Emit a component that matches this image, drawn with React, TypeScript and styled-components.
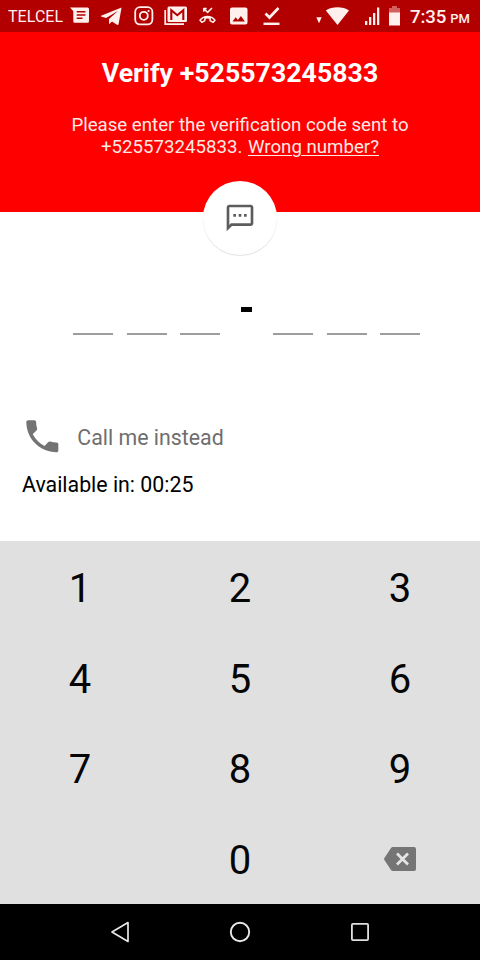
import React from "react";
import styled, { createGlobalStyle } from "styled-components";

const GlobalStyle = createGlobalStyle`
  * { box-sizing: border-box; }
  body { margin: 0; background: #fff; font-family: Roboto, "Liberation Sans", sans-serif; }
`;

const Screen = styled.div`
  width: 480px;
  height: 960px;
  display: flex;
  flex-direction: column;
  background: #fff;
  overflow: hidden;
`;

const StatusBar = styled.header`
  height: 32px;
  flex: none;
  display: flex;
  align-items: center;
  background: #b20000;
  color: #fff0ee;
  padding: 0 10px 0 8px;
`;

const Carrier = styled.span`
  width: 62px;
  padding-top: 1px;
  font-size: 16px;
  line-height: 32px;
  letter-spacing: 0.05px;
  white-space: nowrap;
`;

const StatusIcon = styled.svg<{ $gap: number }>`
  display: block;
  flex: none;
  margin-left: ${({ $gap }) => $gap}px;
`;

const Clock = styled.time`
  margin-left: auto;
  padding-top: 2px;
  font-size: 18.7px;
  font-weight: 500;
  letter-spacing: -0.1px;
  white-space: nowrap;
`;

const Meridiem = styled.span`
  margin-left: 4px;
  font-size: 13px;
  letter-spacing: 0;
`;

const Header = styled.section`
  height: 180px;
  flex: none;
  display: flex;
  flex-direction: column;
  align-items: center;
  background: #fe0000;
  color: #fff;
  text-align: center;
`;

const Title = styled.h1`
  margin: 25px 0 0;
  font-size: 26.67px;
  line-height: 32px;
  font-weight: 700;
  letter-spacing: 0.04px;
  white-space: nowrap;
`;

const Instructions = styled.p`
  margin: 25px 0 0;
  color: #ffe9e4;
  font-size: 18.67px;
  line-height: 22px;
  white-space: nowrap;
`;

const WrongNumber = styled.a`
  margin-left: 1px;
  text-decoration: underline;
  text-decoration-thickness: 1px;
  text-underline-offset: 2px;
`;

const MessageBadge = styled.div`
  width: 74px;
  height: 74px;
  flex: none;
  margin: -31px auto 0;
  display: grid;
  place-items: center;
  border-radius: 50%;
  background: #fff;
  box-shadow: 0 1px 1px rgba(0, 0, 0, 0.12);
`;

const CodeRow = styled.div`
  height: 80px;
  flex: none;
  display: flex;
  align-items: flex-end;
  justify-content: space-between;
  padding: 0 60px 0 73px;
`;

const DigitGroup = styled.div`
  display: flex;
  gap: 13.5px;
`;

const DigitSlot = styled.div`
  width: 40px;
  height: 36px;
  border-bottom: 2px solid #9d9d9d;
`;

const Dash = styled.div`
  width: 11px;
  height: 5px;
  margin-bottom: 23px;
  background: #000;
`;

const CallArea = styled.section`
  flex: 1;
  display: flex;
  flex-direction: column;
  padding: 81px 22px 0;
`;

const CallRow = styled.div`
  display: flex;
  align-items: center;
  height: 42px;
  color: #6e6e6e;
  font-size: 21.33px;
`;

const CallIcon = styled.svg`
  width: 42.67px;
  height: 42.67px;
  flex: none;
  margin: -1px 13.7px 0 -1px;
`;

const Countdown = styled.p`
  margin: 14px 0 0;
  color: #000;
  font-size: 21.33px;
  line-height: 25px;
`;

const Keypad = styled.div`
  height: 363px;
  flex: none;
  display: grid;
  grid-template-columns: repeat(3, 1fr);
  grid-template-rows: repeat(4, 1fr);
  background: #e0e0e0;
`;

const Key = styled.button`
  display: flex;
  align-items: center;
  justify-content: center;
  border: 0;
  padding: 4px 0 0;
  background: none;
  color: #050505;
  font: 400 40px/47px Roboto, sans-serif;
`;

const DeleteKey = styled(Key)`
  padding: 0;
`;

const NavBar = styled.nav`
  height: 56px;
  flex: none;
  display: flex;
  justify-content: center;
  align-items: center;
  background: #000;
`;

const NavButton = styled.div`
  width: 120px;
  display: flex;
  justify-content: center;
`;

const StatusIcons = () => (
  <>
    <StatusIcon $gap={0} width="20" height="18" viewBox="0 0 20 18" fill="currentColor">
      <path fillRule="evenodd" d="M0 .5h17.5Q19 .5 19 2v12.2q0 1.500-1.500 1.500H4.800q-1.500 0-1.500-1.500V4.300zM6.700 4v1.600h8.800V4zM6.700 7.200v1.600h8.800V7.200zM6.700 10.400V12h5.800v-1.600z" />
    </StatusIcon>
    <StatusIcon $gap={11} width="21" height="18" viewBox="0 0 21 18" fill="currentColor">
      <path d="M20.600.5 0 8.700c-.5.3-.4.7.1.9l5 1.500L17.200 3.700 8 12v5.200l3-2.800 5 3.400c.8.4 1.400.2 1.600-.7z" />
    </StatusIcon>
    <StatusIcon $gap={12} width="20" height="20" viewBox="0 0 20 20" fill="none" stroke="currentColor" strokeWidth="1.800">
      <rect x="1.200" y="1.200" width="17.200" height="17.200" rx="4.800" />
      <circle cx="9.800" cy="9.800" r="4" />
      <circle cx="14.600" cy="5" r="1.100" fill="currentColor" stroke="none" />
    </StatusIcon>
    <StatusIcon $gap={10} width="24" height="20" viewBox="0 0 24 20" fill="none">
      <path d="M1.200 4v14.200H20" stroke="currentColor" strokeWidth="1.700" />
      <rect x="3.500" y=".5" width="19.500" height="15.500" rx="1.500" fill="currentColor" />
      <path d="M7.300 14V4.200l6 5 6-5V14" stroke="#b20000" strokeWidth="2.100" />
    </StatusIcon>
    <StatusIcon $gap={11} width="17" height="18" viewBox="0 0 17 18" fill="none" stroke="currentColor" strokeWidth="1.500" strokeLinejoin="round">
      <path d="M4.700 4.800V1.500h3M4.800 1.600l3.800 3.800L13 1" />
      <path d="M1 13.200c4-5 11-5 15 0l-1.900 2.100-3-1.700v-2.400c-1.700-.5-3.500-.5-5.200 0v2.400l-3 1.700z" />
    </StatusIcon>
    <StatusIcon $gap={14} width="18" height="18" viewBox="0 0 18 18" fill="currentColor">
      <path fillRule="evenodd" d="M2 .5h13.500q2 0 2 2v13q0 2-2 2H2q-2 0-2-2v-13q0-2 2-2zM2.500 14.500h12.400l-4-5.500-3 4-2.200-2.700z" />
    </StatusIcon>
    <StatusIcon $gap={15} width="18" height="20" viewBox="0 0 18 20" fill="none" stroke="currentColor">
      <path d="m2.500 7.500 4 4L15.500 2" strokeWidth="2.700" />
      <path d="M.5 17.800h16" strokeWidth="2.400" />
    </StatusIcon>
    <StatusIcon $gap={35} width="34" height="20" viewBox="0 0 34 20" fill="currentColor">
      <path d="M.3 11.200h5.400l-2.700 6zM9.800 4.500C16 .2 27 .2 33 4.500L21.500 19z" />
    </StatusIcon>
    <StatusIcon $gap={15} width="15" height="20" viewBox="0 0 15 20" fill="currentColor">
      <path d="M0 15h2.300v4H0zM4 11h2.300v8H4zM8 7h2.300v12H8zM12 1.500h2.300V19H12z" />
    </StatusIcon>
    <StatusIcon $gap={9} width="12" height="20" viewBox="0 0 12 20" fill="currentColor">
      <path d="M3 0h5v2h3v5H0V2h3z" opacity=".4" />
      <path d="M0 6.500h11V19.500H0z" />
    </StatusIcon>
  </>
);

const slots = [0, 1, 2];
const digits = ["1", "2", "3", "4", "5", "6", "7", "8", "9"];

export default function App() {
  return (
    <>
      <GlobalStyle />
      <Screen>
        <StatusBar>
          <Carrier>TELCEL</Carrier>
          <StatusIcons />
          <Clock>
            7:35<Meridiem>PM</Meridiem>
          </Clock>
        </StatusBar>

        <Header>
          <Title>Verify +525573245833</Title>
          <Instructions>
            Please enter the verification code sent to
            <br />
            +525573245833. <WrongNumber>Wrong number?</WrongNumber>
          </Instructions>
        </Header>

        <MessageBadge>
          <svg width="32" height="32" viewBox="0 0 24 24" fill="#5d5d5d">
            <path d="M20 2H4c-1.100 0-2 .9-2 2v18l4-4h14c1.100 0 2-.9 2-2V4c0-1.100-.9-2-2-2zm0 14H5.200L4 17.200V4h16v12zM7 9h2v2H7zm4 0h2v2h-2zm4 0h2v2h-2z" />
          </svg>
        </MessageBadge>

        <CodeRow>
          <DigitGroup>{slots.map((s) => <DigitSlot key={s} />)}</DigitGroup>
          <Dash />
          <DigitGroup>{slots.map((s) => <DigitSlot key={s} />)}</DigitGroup>
        </CodeRow>

        <CallArea>
          <CallRow>
            <CallIcon viewBox="0 0 24 24" fill="#737373">
              <path d="M6.620 10.790c1.440 2.830 3.760 5.140 6.590 6.590l2.200-2.200c.27-.27.67-.36 1.020-.24 1.120.37 2.330.57 3.570.57.55 0 1 .45 1 1V20c0 .55-.45 1-1 1-9.390 0-17-7.610-17-17 0-.55.45-1 1-1h3.500c.55 0 1 .45 1 1 0 1.250.2 2.450.57 3.570.11.35.03.74-.25 1.020z" />
            </CallIcon>
            Call me instead
          </CallRow>
          <Countdown>Available in: 00:25</Countdown>
        </CallArea>

        <Keypad>
          {digits.map((d) => <Key key={d}>{d}</Key>)}
          <span />
          <Key>0</Key>
          <DeleteKey aria-label="Delete">
            <svg width="32" height="26" viewBox="0 0 32 26">
              <path d="M9 1h21q2 0 2 2v20q0 2-2 2H9q-1.300 0-2-1L.4 14q-.6-1 0-2L7 2q.7-1 2-1z" fill="#757575" />
              <path d="m13 7.500 11 11m0-11-11 11" stroke="#e5e5e5" strokeWidth="2.700" />
            </svg>
          </DeleteKey>
        </Keypad>

        <NavBar>
          <NavButton>
            <svg width="20" height="22" viewBox="0 0 20 22" fill="none" stroke="#e8e8e8" strokeWidth="1.700" strokeLinejoin="round">
              <path d="M18 1.600v18.800L2 11z" />
            </svg>
          </NavButton>
          <NavButton>
            <svg width="22" height="22" viewBox="0 0 22 22" fill="none" stroke="#e8e8e8" strokeWidth="1.900">
              <circle cx="11" cy="11" r="9.200" />
            </svg>
          </NavButton>
          <NavButton>
            <svg width="20" height="20" viewBox="0 0 20 20" fill="none" stroke="#e0e0e0" strokeWidth="1.800">
              <rect x="1.900" y="1.900" width="16.200" height="16.200" rx="1" />
            </svg>
          </NavButton>
        </NavBar>
      </Screen>
    </>
  );
}
